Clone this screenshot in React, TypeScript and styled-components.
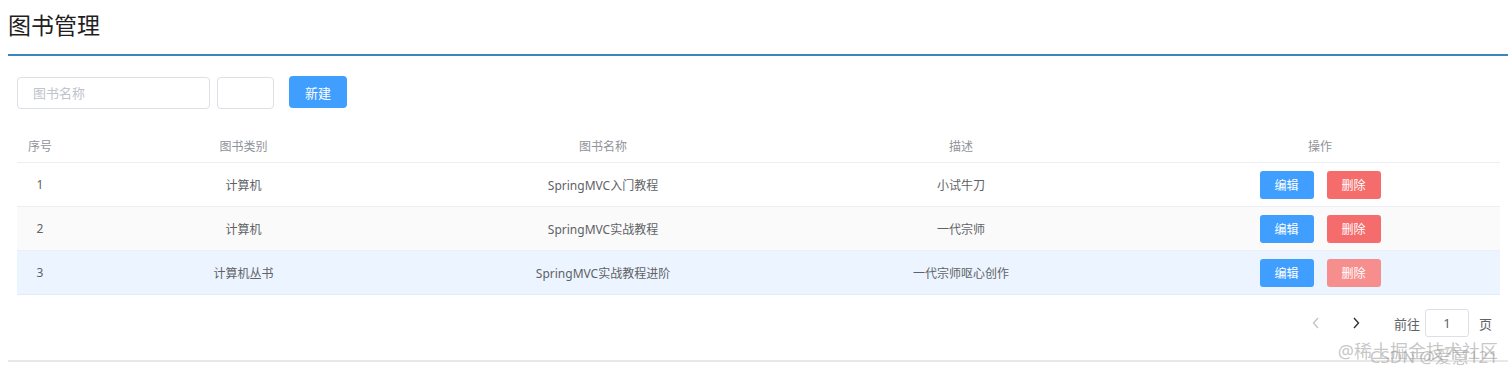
import styled, { createGlobalStyle } from 'styled-components'

const GlobalStyle = createGlobalStyle`
  body {
    margin: 0;
    background: #fff;
    font-family: "Noto Sans", "Noto Sans CJK SC", sans-serif;
    color: #606266;
  }
`

const Page = styled.div`
  position: relative;
  padding: 0 4px 0 8px;
  height: 373px;
  overflow: hidden;
`

const Header = styled.div`
  padding: 7px 0 11px;
  border-bottom: 2px solid #3a86bd;
`

const Title = styled.h2`
  margin: 0;
  font-size: 23px;
  line-height: 36px;
  font-weight: 400;
  color: #1f1f1f;
`

const Content = styled.div`
  padding: 20px 8px 0 9px;
`

const Toolbar = styled.div`
  display: flex;
  align-items: flex-start;
  gap: 7px;
`

const Input = styled.input<{ w: number }>`
  box-sizing: border-box;
  width: ${(p) => p.w}px;
  height: 32px;
  margin-top: 1px;
  padding: 0 15px;
  border: 1px solid #dcdfe6;
  border-radius: 4px;
  font-family: inherit;
  font-size: 13px;
  color: #606266;
  outline: none;
  &::placeholder {
    color: #c0c4cc;
  }
`

const PrimaryButton = styled.button`
  margin-left: 8px;
  width: 58px;
  height: 32px;
  border: none;
  border-radius: 4px;
  background: #409eff;
  color: #fff;
  font-family: inherit;
  font-size: 13px;
`

const Table = styled.div`
  margin-top: 20px;
`

const Row = styled.div<{ bg?: string; head?: boolean }>`
  display: grid;
  grid-template-columns: 46px 361px 358px 358px 1fr;
  align-items: center;
  height: ${(p) => (p.head ? 33 : 43)}px;
  border-bottom: 1px solid ${(p) => (p.bg === '#ecf5ff' ? '#e2ecf7' : '#ebeef5')};
  background: ${(p) => p.bg || '#fff'};
  font-size: 12px;
  color: ${(p) => (p.head ? '#909399' : '#606266')};
`

const Cell = styled.div`
  text-align: center;
  display: flex;
  justify-content: center;
  gap: 13px;
`

const SmallButton = styled.button<{ tone: 'edit' | 'del' | 'delHover' }>`
  width: 54px;
  height: 28px;
  border: none;
  border-radius: 3px;
  color: #fff;
  font-family: inherit;
  font-size: 12px;
  background: ${(p) =>
    p.tone === 'edit' ? '#409eff' : p.tone === 'del' ? '#f56c6c' : '#f78e8e'};
`

const Pager = styled.div`
  display: flex;
  justify-content: flex-end;
  align-items: center;
  margin-top: 14px;
  padding-right: 8px;
  font-size: 13px;
  color: #606266;
`

const Arrow = styled.span<{ off?: boolean }>`
  width: 40px;
  text-align: center;
  display: flex;
  justify-content: center;
  color: ${(p) => (p.off ? '#c0c4cc' : '#303133')};
`

const Jump = styled.span`
  display: flex;
  align-items: center;
  margin-left: 18px;
  gap: 5px;
`

const PageInput = styled.input`
  box-sizing: border-box;
  width: 44px;
  height: 28px;
  border: 1px solid #dcdfe6;
  border-radius: 3px;
  text-align: center;
  font-family: inherit;
  font-size: 13px;
  color: #606266;
  margin-right: 5px;
`

const Footer = styled.div`
  margin-top: 23px;
  border-top: 2px solid #e8e8e8;
`

const Watermark = styled.div<{ top: number; right: number; size: number }>`
  position: absolute;
  top: ${(p) => p.top}px;
  right: ${(p) => p.right}px;
  font-size: ${(p) => p.size}px;
  color: rgba(150, 150, 150, 0.55);
  white-space: nowrap;
  pointer-events: none;
`

const books = [
  { id: 1, type: '计算机', name: 'SpringMVC入门教程', desc: '小试牛刀' },
  { id: 2, type: '计算机', name: 'SpringMVC实战教程', desc: '一代宗师' },
  { id: 3, type: '计算机丛书', name: 'SpringMVC实战教程进阶', desc: '一代宗师呕心创作' },
]

const rowBg = ['#fff', '#fafafa', '#ecf5ff']

const Chevron = ({ dir }: { dir: 'left' | 'right' }) => (
  <svg width="8" height="12" viewBox="0 0 8 12">
    <path
      d={dir === 'left' ? 'M6 1L1.5 6 6 11' : 'M2 1l4.5 5L2 11'}
      fill="none"
      stroke="currentColor"
      strokeWidth="1.4"
    />
  </svg>
)

export default function App() {
  return (
    <Page>
      <GlobalStyle />
      <Header>
        <Title>图书管理</Title>
      </Header>
      <Content>
        <Toolbar>
          <Input w={193} placeholder="图书名称" />
          <Input w={57} />
          <PrimaryButton>新建</PrimaryButton>
        </Toolbar>
        <Table>
          <Row head>
            <Cell>序号</Cell>
            <Cell>图书类别</Cell>
            <Cell>图书名称</Cell>
            <Cell>描述</Cell>
            <Cell>操作</Cell>
          </Row>
          {books.map((b, i) => (
            <Row key={b.id} bg={rowBg[i]}>
              <Cell>{b.id}</Cell>
              <Cell>{b.type}</Cell>
              <Cell>{b.name}</Cell>
              <Cell>{b.desc}</Cell>
              <Cell>
                <SmallButton tone="edit">编辑</SmallButton>
                <SmallButton tone={i === 2 ? 'delHover' : 'del'}>删除</SmallButton>
              </Cell>
            </Row>
          ))}
        </Table>
        <Pager>
          <Arrow off>
            <Chevron dir="left" />
          </Arrow>
          <Arrow>
            <Chevron dir="right" />
          </Arrow>
          <Jump>
            前往
            <PageInput defaultValue="1" />
            页
          </Jump>
        </Pager>
      </Content>
      <Footer />
      <Watermark top={337} right={14} size={18}>
        @稀土掘金技术社区
      </Watermark>
      <Watermark top={343} right={14} size={17}>
        CSDN @爱意121
      </Watermark>
    </Page>
  )
}
